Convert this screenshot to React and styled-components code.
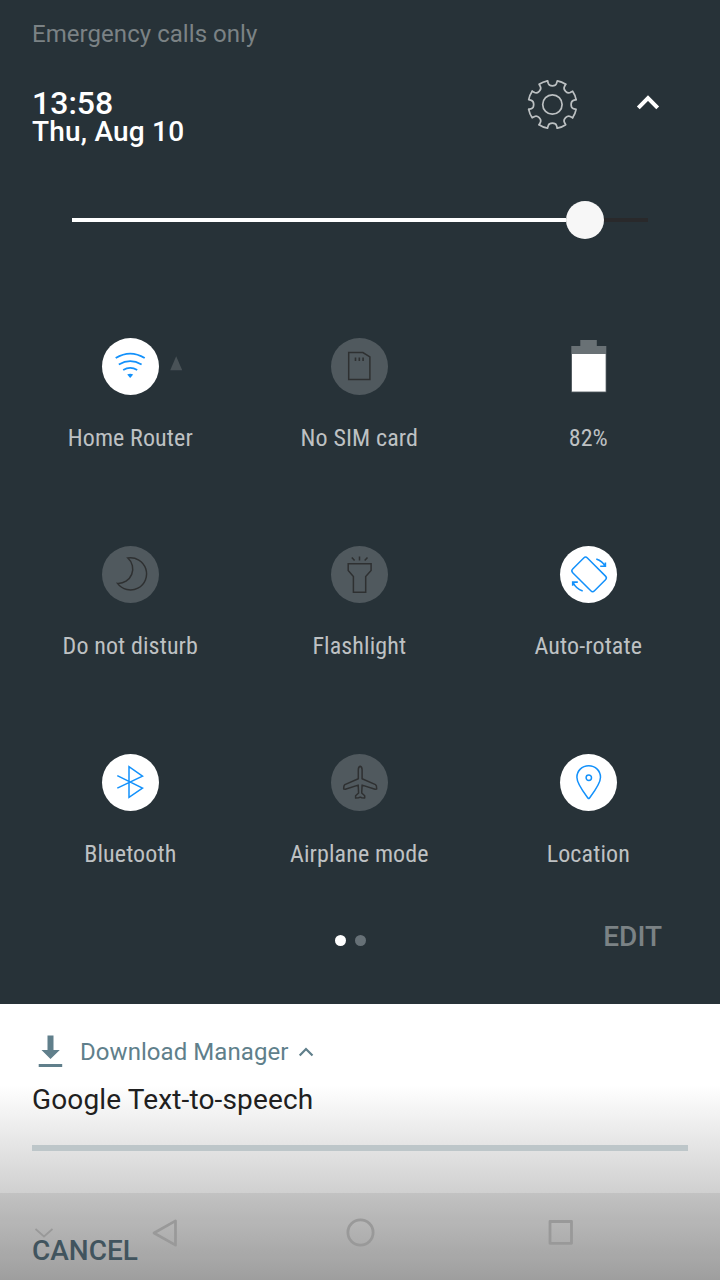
import React from "react";
import styled, { createGlobalStyle } from "styled-components";

const GlobalStyle = createGlobalStyle`
  * { box-sizing: border-box; }
  body { margin: 0; background: #273238; font-family: Roboto, "Noto Sans", sans-serif; }
  svg { display: block; flex: none; }
`;

const Screen = styled.main`
  position: relative;
  display: flex;
  flex-direction: column;
  width: 720px;
  height: 1280px;
  overflow: hidden;
  background: #273238;
`;

const QuickPanel = styled.section`
  display: flex;
  flex-direction: column;
  height: 1004px;
`;

const Carrier = styled.div`
  margin-top: 20px;
  padding-left: 32px;
  font-size: 24px;
  line-height: 28px;
  letter-spacing: 0.05px;
  color: #7b8285;
`;

const Header = styled.header`
  display: flex;
  height: 118px;
  padding: 27px 59px 0 32px;
`;

const Clock = styled.div`
  flex: 1;
  padding-top: 14px;
  font-weight: 500;
  color: #fff;
`;

const Time = styled.div`
  font-size: 32px;
  line-height: 28px;
`;

const DateText = styled.div`
  margin-top: 1px;
  font-size: 28px;
  line-height: 28px;
  letter-spacing: 0.2px;
`;

const IconButton = styled.button`
  display: block;
  width: ${(p) => p.$width}px;
  height: 60px;
  margin-left: ${(p) => p.$gap || 0}px;
  padding: 0;
  border: 0;
  background: none;
`;

const Slider = styled.div`
  display: flex;
  align-items: center;
  height: 38px;
  margin: 35px 72px 0;
`;

const SliderTrack = styled.div`
  width: ${(p) => p.$width}px;
  height: 4px;
  background: ${(p) => (p.$filled ? "#fff" : "#29292b")};
`;

const SliderThumb = styled.div`
  width: 38px;
  height: 38px;
  border-radius: 50%;
  background: #f7f7f7;
`;

const Tiles = styled.div`
  display: grid;
  grid-template-columns: repeat(3, 229px);
  grid-auto-rows: 208px;
  margin: 98.5px 0 0 15.8px;
`;

const Tile = styled.div`
  display: flex;
  flex-direction: column;
  align-items: center;
`;

const TileIcon = styled.div`
  position: relative;
  width: 57px;
  height: 57px;
  border-radius: 50%;
  background: ${(p) => ({ on: "#fff", off: "#50595e", bare: "transparent" })[p.$state]};
  color: ${(p) => (p.$state === "on" ? "#1391fb" : "#2e3031")};
`;

const ExpandMark = styled.svg`
  position: absolute;
  left: 68px;
  top: 18px;
`;

const TileLabel = styled.div`
  margin-top: 29.5px;
  font-family: "Roboto Condensed", Roboto, sans-serif;
  font-stretch: 75%;
  font-size: 24px;
  line-height: 28px;
  letter-spacing: 0.12px;
  white-space: nowrap;
  color: #bec1c3;
`;

const PanelFooter = styled.footer`
  display: grid;
  grid-template-columns: 1fr auto 1fr;
  align-items: center;
  height: 40px;
  margin-top: -44.5px;
  padding: 0 58px 0 77px;
`;

const Pages = styled.div`
  display: flex;
  grid-column: 2;
  gap: 9px;
  padding-top: 6px;
  margin-left: -35px;
`;

const PageDot = styled.span`
  width: 11px;
  height: 11px;
  border-radius: 50%;
  background: ${(p) => (p.$active ? "#fff" : "#677177")};
`;

const EditButton = styled.button`
  justify-self: end;
  padding: 0;
  border: 0;
  background: none;
  font: 500 28px/32px Roboto, sans-serif;
  color: #7b8285;
`;

const Notification = styled.section`
  height: 276px;
  padding: 31px 32px 0;
  background: linear-gradient(#fff 81px, #aaa 276px);
`;

const AppRow = styled.div`
  display: flex;
  align-items: center;
  height: 34px;
  padding-left: 6px;
  color: #607f8b;
`;

const AppName = styled.span`
  margin: 0 10px 0 17px;
  font-size: 24px;
  line-height: 28px;
  letter-spacing: 0.06px;
`;

const Title = styled.div`
  margin-top: 15px;
  font-size: 28px;
  line-height: 32px;
  letter-spacing: 0.14px;
  color: #202020;
`;

const Progress = styled.div`
  height: 6px;
  margin-top: 29px;
  background: #bdc6c9;
`;

const CancelButton = styled.button`
  display: block;
  margin-top: 84px;
  padding: 0;
  border: 0;
  background: none;
  font: 500 28px/32px Roboto, sans-serif;
  color: #465b65;
`;

const NavBar = styled.nav`
  position: absolute;
  left: 0;
  right: 0;
  bottom: 0;
  display: flex;
  align-items: center;
  height: 87px;
  padding: 0 0 8px 34px;
  background: rgba(0, 0, 0, 0.065);
  color: #999;
`;

const NavItem = styled.div`
  margin-left: ${(p) => p.$gap || 0}px;
`;

function Glyph({ children }) {
  return (
    <svg width="57" height="57" viewBox="-28.5 -27.8 57 57" fill="none" stroke="currentColor" strokeWidth="1.5">
      {children}
    </svg>
  );
}

function GearIcon() {
  return (
    <svg width="54" height="60" viewBox="-27.4 -29.5 54 60" fill="none" stroke="#bcc0c2" strokeWidth="1.7" strokeLinecap="round" strokeLinejoin="round">
      <circle r="9.7" />
      {[0, 45, 90, 135, 180, 225, 270, 315].map((a) => (
        <path
          key={a}
          transform={`rotate(${a})`}
          d="M-4.9-23.7L-4.1-21Q-3.3-18.7 0-18.7T4.1-21L4.9-23.7Q9.3-22.9 13.3-20.2"
        />
      ))}
    </svg>
  );
}

const wifi = (
  <Glyph>
    <path strokeWidth="1.8" d="M-14.8-7.7Q-7.5-12.2-.3-12.2T14.2-7.7M-11.7-1.3Q-5.8-4.6-.3-4.6T11.1-1.3M-7.3 4.1Q-3.8 2-.3 2T6.7 4.1" />
    <path stroke="none" fill="currentColor" d="M-3.3 8.6Q-.3 7.2 2.7 8.6L-.3 12.2Z" />
  </Glyph>
);

const sim = (
  <Glyph>
    <path d="M-10.8-13.3H3.4L10.4-9V13.6H-10.8Z" />
    <path strokeWidth="1.6" d="M-4-8.4V-4.8M-.2-8.4V-4.8M3.6-8.4V-4.8" />
  </Glyph>
);

const battery = (
  <svg width="57" height="57" viewBox="-.3 .4 57 57">
    <path fill="#697175" d="M20 2.5h16.5v6H46v46.2H11V8.5h9Z" />
    <path fill="#fff" d="M11.7 16.4h33.6v37.5H11.7Z" />
  </svg>
);

const moon = (
  <Glyph>
    <path d="M-2.7-15.8A16.1 16.1 0 1 1-13 9.6A14.5 14.5 0 0 0-2.7-15.8Z" />
  </Glyph>
);

const flashlight = (
  <Glyph>
    <path d="M-11.3-10.1H11.6V-3.3L6.2 2.8V18.4H-6.1V2.8L-11.3-3.3ZM-7.7-16.4L-4.9-13.2M0-17.4V-13.2M8-16.4L5.2-13.2" />
  </Glyph>
);

const rotate = (
  <Glyph>
    <rect x="-15.4" y="-10.4" width="30.8" height="20.8" rx="2.6" transform="translate(.6 .6) rotate(45)" />
    <path strokeWidth="1.6" d="M7.8-14.7Q14-12.5 16.5-7.8M11.7-7.6H16.9V-11.4M-5.8 17.3Q-12.5 15-15.4 8.7M-10.7 8.3H-15.8V12" />
  </Glyph>
);

const bluetooth = (
  <Glyph>
    <path d="M-13.2-6.2L12 6.3L-1.5 15.5V-15.2L12-5.7L-13.2 6.3" />
  </Glyph>
);

const airplane = (
  <Glyph>
    <path
      strokeLinejoin="round"
      d="M.7-15.5Q2.5-15 2.6-12V-3.1L16 2.8Q17.3 3.7 17.2 7.3L15.6 7.5L2.6 3.3L2.2 11.2L5.2 14V16.3L2.3 16L.7 15.3L-.9 16L-3.9 16.3V14L-.9 11.2L-1.3 3.3L-14.2 7.5L-15.8 7.3Q-15.9 3.7-14.6 2.8L-1.2-3.1V-12Q-1.1-15 .7-15.5Z"
    />
  </Glyph>
);

const pin = (
  <Glyph>
    <path strokeLinejoin="round" d="M.2-16C7-16 12-11 12-4.5C12 2 5.8 9.8.9 16.3Q.2 17-.5 16.3C-5.4 9.8-11.6 2-11.6-4.5C-11.6-11-6.6-16 .2-16Z" />
    <circle cx=".3" cy="-4.1" r="2.7" />
  </Glyph>
);

const TILES = [
  { label: "Home Router", icon: wifi, state: "on", expandable: true },
  { label: "No SIM card", icon: sim, state: "off" },
  { label: "82%", icon: battery, state: "bare" },
  { label: "Do not disturb", icon: moon, state: "off" },
  { label: "Flashlight", icon: flashlight, state: "off" },
  { label: "Auto-rotate", icon: rotate, state: "on" },
  { label: "Bluetooth", icon: bluetooth, state: "on" },
  { label: "Airplane mode", icon: airplane, state: "off" },
  { label: "Location", icon: pin, state: "on" },
];

export default function App() {
  return (
    <Screen>
      <GlobalStyle />
      <QuickPanel>
        <Carrier>Emergency calls only</Carrier>
        <Header>
          <Clock>
            <Time>13:58</Time>
            <DateText>Thu, Aug 10</DateText>
          </Clock>
          <IconButton $width={54}>
            <GearIcon />
          </IconButton>
          <IconButton $width={26} $gap={56}>
            <svg width="26" height="60" viewBox="0 0 26 60" fill="none" stroke="#fff" strokeWidth="4">
              <path d="M3.3 32.8L13 23L22.7 32.8" />
            </svg>
          </IconButton>
        </Header>
        <Slider>
          <SliderTrack $width={494} $filled />
          <SliderThumb />
          <SliderTrack $width={44} />
        </Slider>
        <Tiles>
          {TILES.map((t) => (
            <Tile key={t.label}>
              <TileIcon $state={t.state}>
                {t.icon}
                {t.expandable && (
                  <ExpandMark width="13" height="15" viewBox="0 0 13 15">
                    <path fill="#495257" d="M6.2 .2L12.2 14.2H.2Z" />
                  </ExpandMark>
                )}
              </TileIcon>
              <TileLabel>{t.label}</TileLabel>
            </Tile>
          ))}
        </Tiles>
        <PanelFooter>
          <Pages>
            <PageDot $active />
            <PageDot />
          </Pages>
          <EditButton>EDIT</EditButton>
        </PanelFooter>
      </QuickPanel>
      <Notification>
        <AppRow>
          <svg width="25" height="34" viewBox="0 0 25 34" fill="currentColor">
            <path d="M9.5 .5h6v14.5h6.3L12.5 24L3.5 15h6ZM.7 29h23.5v3H.7Z" />
          </svg>
          <AppName>Download Manager</AppName>
          <svg width="16" height="12" viewBox="0 0 16 12" fill="none" stroke="currentColor" strokeWidth="2.2">
            <path d="M1.7 9.6L8 3L14.5 9.6" />
          </svg>
        </AppRow>
        <Title>Google Text-to-speech</Title>
        <Progress />
        <CancelButton>CANCEL</CancelButton>
      </Notification>
      <NavBar>
        <NavItem>
          <svg width="20" height="10" viewBox="0 0 20 10" fill="none" stroke="currentColor" strokeWidth="1.7">
            <path d="M1.5 1L10 8.5L18.5 1" />
          </svg>
        </NavItem>
        <NavItem $gap={97}>
          <svg width="28" height="30" viewBox="0 0 28 30" fill="none" stroke="currentColor" strokeWidth="2.7" strokeLinejoin="round">
            <path d="M3 15L24.5 2.8V27.2Z" />
          </svg>
        </NavItem>
        <NavItem $gap={167}>
          <svg width="29" height="29" viewBox="0 0 29 29" fill="none" stroke="currentColor" strokeWidth="2.8">
            <circle cx="14.5" cy="14.5" r="12.6" />
          </svg>
        </NavItem>
        <NavItem $gap={173}>
          <svg width="26" height="26" viewBox="0 0 26 26" fill="none" stroke="currentColor" strokeWidth="2.8" strokeLinejoin="round">
            <path d="M2 1.5H23.5V23.3H2Z" />
          </svg>
        </NavItem>
      </NavBar>
    </Screen>
  );
}
